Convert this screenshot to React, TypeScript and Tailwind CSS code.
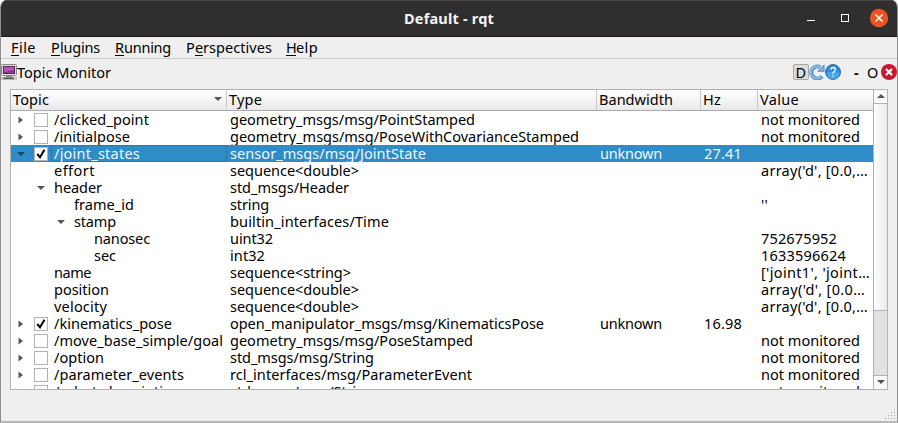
import { useLayoutEffect, useRef } from 'react';

// Text run that tracks its letters to span exactly w pixels.
function T({ children, w, className = '' }: { children: string; w: number; className?: string }) {
  const ref = useRef<HTMLSpanElement>(null);
  useLayoutEffect(() => {
    const fit = () => {
      const el = ref.current;
      if (!el) return;
      el.style.letterSpacing = '0px';
      const natural = el.getBoundingClientRect().width;
      el.style.letterSpacing = (w - natural) / children.length + 'px';
    };
    fit();
    document.fonts.ready.then(fit);
  }, [children, w]);
  return (
    <span ref={ref} className={`inline-block shrink-0 whitespace-pre ${className}`}>
      {children}
    </span>
  );
}

type Row = {
  name: string;
  nw: number;
  depth: number;
  arrow?: 'right' | 'down';
  check?: boolean;
  type: string;
  tw: number;
  hz?: string;
  value?: string;
  vw?: number;
  selected?: boolean;
};

const NM = { value: 'not monitored', vw: 99 };

const rows: Row[] = [
  { name: '/clicked_point', nw: 95, depth: 0, arrow: 'right', check: false, type: 'geometry_msgs/msg/PointStamped', tw: 245, ...NM },
  { name: '/initialpose', nw: 76, depth: 0, arrow: 'right', check: false, type: 'geometry_msgs/msg/PoseWithCovarianceStamped', tw: 349, ...NM },
  { name: '/joint_states', nw: 86, depth: 0, arrow: 'down', check: true, type: 'sensor_msgs/msg/JointState', tw: 196, hz: '27.41', selected: true },
  { name: 'effort', nw: 41, depth: 0, type: 'sequence<double>', tw: 129, value: "array('d', [0.0,…", vw: 107 },
  { name: 'header', nw: 48, depth: 0, arrow: 'down', type: 'std_msgs/Header', tw: 119 },
  { name: 'frame_id', nw: 60, depth: 1, type: 'string', tw: 39, value: "''", vw: 7 },
  { name: 'stamp', nw: 42, depth: 1, arrow: 'down', type: 'builtin_interfaces/Time', tw: 159 },
  { name: 'nanosec', nw: 56, depth: 2, type: 'uint32', tw: 43, value: '752675952', vw: 76 },
  { name: 'sec', nw: 22, depth: 2, type: 'int32', tw: 35, value: '1633596624', vw: 85 },
  { name: 'name', nw: 37, depth: 0, type: 'sequence<string>', tw: 121, value: "['joint1', 'joint…", vw: 109 },
  { name: 'position', nw: 55, depth: 0, type: 'sequence<double>', tw: 129, value: "array('d', [0.0…", vw: 104 },
  { name: 'velocity', nw: 53, depth: 0, type: 'sequence<double>', tw: 129, value: "array('d', [0.0,…", vw: 107 },
  { name: '/kinematics_pose', nw: 118, depth: 0, arrow: 'right', check: true, type: 'open_manipulator_msgs/msg/KinematicsPose', tw: 314, hz: '16.98' },
  { name: '/move_base_simple/goal', nw: 169, depth: 0, arrow: 'right', check: false, type: 'geometry_msgs/msg/PoseStamped', tw: 243, ...NM },
  { name: '/option', nw: 50, depth: 0, arrow: 'right', check: false, type: 'std_msgs/msg/String', tw: 144, ...NM },
  { name: '/parameter_events', nw: 130, depth: 0, arrow: 'right', check: false, type: 'rcl_interfaces/msg/ParameterEvent', tw: 242, ...NM },
  { name: '/robot_description', nw: 127, depth: 0, arrow: 'right', check: false, type: 'std_msgs/msg/String', tw: 144, ...NM },
];

function Arrow({ dir, dark }: { dir: 'right' | 'down' | 'up'; dark?: boolean }) {
  const d = dir === 'right' ? 'M0.5 0.5 L5 4 L0.5 7.5Z' : dir === 'down' ? 'M0 2 H8 L4 6Z' : 'M0 6 H8 L4 2Z';
  return (
    <svg className="h-2 w-2 shrink-0" viewBox="0 0 8 8">
      <path d={d} fill={dark ? '#184463' : '#555'} />
    </svg>
  );
}

function Check({ on }: { on: boolean }) {
  return (
    <span className="flex h-[14px] w-[14px] shrink-0 items-center justify-center border border-[#b2b2b2] bg-white">
      {on && (
        <svg className="h-3 w-3" viewBox="0 0 12 12">
          <path d="M2.3 6 L5 9.3 L9.5 1.8" fill="none" stroke="#000" strokeWidth="2" />
        </svg>
      )}
    </span>
  );
}

const indents = ['pl-[6px]', 'pl-[26px]', 'pl-[46px]'];
const arrowIndents = ['pl-[26px]', 'pl-[46px]', 'pl-[66px]'];

function TreeRow({ r }: { r: Row }) {
  const top = r.check !== undefined;
  return (
    <div className={`flex h-[17px] shrink-0 items-center leading-[17px] ${r.selected ? 'bg-[#308cc6] text-[#eff7fb]' : ''}`}>
      <div className="flex h-full w-[216px] shrink-0 items-center">
        {top ? (
          <>
            <span className={`flex w-[23px] shrink-0 ${r.arrow === 'down' ? 'pl-[6px]' : 'pl-[7px]'}`}>
              <Arrow dir={r.arrow!} dark={r.selected} />
            </span>
            <Check on={!!r.check} />
            <span className={`ml-[3px] flex h-full min-w-0 flex-1 items-center border pl-[2px] ${r.selected ? 'border-[#2779ab]' : 'border-transparent'}`}>
              <T w={r.nw}>{r.name}</T>
            </span>
          </>
        ) : (
          <>
            <span className={`flex shrink-0 ${r.arrow ? arrowIndents[r.depth] : indents[r.depth]}`}>
              {r.arrow ? <Arrow dir="down" /> : <span className="w-[28px]" />}
            </span>
            <T w={r.nw} className="ml-[9px]">{r.name}</T>
          </>
        )}
      </div>
      <div className="w-[370px] shrink-0 pl-[3px]">
        <T w={r.tw}>{r.type}</T>
      </div>
      <div className="w-[104px] shrink-0 pl-[3px]">{r.hz && <T w={62}>unknown</T>}</div>
      <div className="w-[57px] shrink-0 pl-[3px]">{r.hz && <T w={38}>{r.hz}</T>}</div>
      <div className="w-[115px] shrink-0 pl-[3px]">{r.value && <T w={r.vw!}>{r.value}</T>}</div>
    </div>
  );
}

function HeaderCell({ label, w, className }: { label: string; w: number; className: string }) {
  return (
    <div className={`flex h-full shrink-0 items-center pl-[2px] ${className}`}>
      <T w={w}>{label}</T>
    </div>
  );
}

function MenuItem({ before = '', hot, after, w }: { before?: string; hot: string; after: string; w: [number, number, number] }) {
  return (
    <span className="flex">
      {before && <T w={w[0]}>{before}</T>}
      <T w={w[1]} className="underline decoration-[1px] underline-offset-2 [text-decoration-skip-ink:none]">{hot}</T>
      <T w={w[2]}>{after}</T>
    </span>
  );
}

export default function App() {
  return (
    <div className="h-[423px] w-[898px] overflow-hidden bg-white font-['Noto_Sans',sans-serif] text-[14.5px] text-[#000]">
      <div className="flex h-[423px] w-[898px] flex-col overflow-hidden rounded-t-[7px] border-x border-b-2 border-x-[#8e8e8e] border-b-[#b8b8b8] bg-[#efefef]">
        <header className="flex h-[37px] shrink-0 items-center border-b border-t border-b-[#1c1b1b] border-t-[#4a4848] bg-[#302e2f]">
          <div className="w-[403px] shrink-0" />
          <T w={90} className="font-bold text-[#f5f5f5]">Default - rqt</T>
          <svg className="mb-px ml-[311px] h-5 w-[86px]" viewBox="0 0 86 20">
            <path d="M2 12.5H10" stroke="#fff" />
            <rect x="36.5" y="6.5" width="7" height="7" fill="none" stroke="#fff" />
            <circle cx="74" cy="10" r="9.2" fill="#e95420" />
            <path d="M70.5 6.5L77.5 13.5M77.5 6.5L70.5 13.5" stroke="#fff" strokeWidth="1.5" />
          </svg>
        </header>

        <nav className="flex h-[22px] shrink-0 gap-[15px] border-b border-[#cfcfcf] pl-[10px] leading-5">
          <MenuItem hot="F" after="ile" w={[0, 8, 17]} />
          <MenuItem hot="P" after="lugins" w={[0, 9, 40]} />
          <MenuItem hot="R" after="unning" w={[0, 9, 47]} />
          <MenuItem before="P" hot="e" after="rspectives" w={[9, 8, 69]} />
          <div className="-ml-px flex">
            <MenuItem hot="H" after="elp" w={[0, 10, 22]} />
          </div>
        </nav>

        <div className="flex h-[31px] shrink-0 items-start">
          <div className="flex h-[26px] w-full items-center">
            <svg className="h-4 w-4 shrink-0" viewBox="0 0 16 16">
              <rect x="0.5" y="0.5" width="15" height="11" rx="1" fill="#ddd" stroke="#8a8a88" />
              <rect x="2" y="2" width="12" height="8" fill="#5d2260" />
              <path d="M3 3H13V6L3 8.5Z" fill="#b257b4" />
              <path d="M3 9L13 6V9Z" fill="#8e3c92" />
              <path d="M5 12H11V13H5Z" fill="#888" />
              <path d="M0.5 13.5H15.5V15.5H0.5Z" fill="#e8e8e6" stroke="#a5a5a3" strokeWidth="0.7" />
              <path d="M3 13.5H13V15H2Z" fill="#555753" />
            </svg>
            <T w={94} className="translate-y-px">Topic Monitor</T>
            <div className="ml-auto flex items-center">
              <span className="flex h-4 w-4 items-center justify-center rounded-[2px] border border-[#a8a8a8] bg-[#dcdcdc] leading-none">
                <T w={11}>D</T>
              </span>
              <svg className="h-4 w-4" viewBox="0 0 16 16">
                <path d="M13 12.2A6 6 0 1 1 11.2 3.2" fill="none" stroke="#4c86bd" strokeWidth="4" />
                <path d="M15.5 0.3V7.7H8Z" fill="#4c86bd" />
                <path d="M12.6 11.8A6 6 0 1 1 12 4.2" fill="none" stroke="#8ab8e2" strokeWidth="2.4" />
                <path d="M14.5 2.5V6.7H10.3Z" fill="#8ab8e2" />
              </svg>
              <svg className="h-4 w-4" viewBox="0 0 16 16">
                <circle cx="8" cy="8" r="7.5" fill="#268bd8" stroke="#426d8b" />
                <path d="M1.5 9Q8 6 14.5 9A6.5 6.5 0 0 1 1.5 9" fill="#45a6e8" />
                <path d="M5.8 5.8Q6 3.5 8.2 3.5Q10.4 3.6 10.4 5.6Q10.3 7 8.8 7.8Q8 8.3 8 9.8M8 11.2V12.6" fill="none" stroke="#f3faff" strokeWidth="1.4" />
              </svg>
              <T w={6} className="ml-[13px] translate-y-px font-bold">-</T>
              <T w={12} className="ml-[7px] translate-y-px">O</T>
              <svg className="ml-[2px] h-4 w-4" viewBox="0 0 16 16">
                <circle cx="8" cy="8" r="8" fill="#c9182f" />
                <path d="M5 5L11 11M11 5L5 11" stroke="#fff" strokeWidth="2.2" />
              </svg>
            </div>
          </div>
        </div>

        <main className="ml-[9px] mt-[-1px] flex h-[301px] w-[878px] shrink-0 border border-[#b2b2b2] bg-white">
          <div className="flex w-[862px] shrink-0 flex-col overflow-hidden">
            <div className="flex h-[21px] shrink-0 border-b border-[#a9a9a9] bg-linear-to-b from-white to-[#e9e9e9]">
              <div className="flex h-full w-[216px] shrink-0 items-center justify-between border-r border-[#c8c8c8] pl-[2px] pr-[4px]">
                <T w={36}>Topic</T>
                <span className="mb-[3px] flex"><Arrow dir="down" /></span>
              </div>
              <HeaderCell label="Type" w={33} className="w-[370px] border-r border-[#c8c8c8]" />
              <HeaderCell label="Bandwidth" w={74} className="w-[104px] border-r border-[#c8c8c8]" />
              <HeaderCell label="Hz" w={18} className="w-[57px] border-r border-[#c8c8c8]" />
              <HeaderCell label="Value" w={39} className="w-[115px]" />
            </div>
            <div className="flex min-h-0 flex-1 flex-col overflow-hidden">
              {rows.map((r) => (
                <TreeRow key={r.name} r={r} />
              ))}
            </div>
          </div>
          <div className="flex w-[14px] shrink-0 flex-col border-l border-[#b2b2b2] bg-[#e1e1e1]">
            <div className="flex h-[13px] items-center justify-center bg-[#fafafa] pb-px"><Arrow dir="up" /></div>
            <div className="h-[208px] border-y border-[#b2b2b2] bg-linear-to-r from-[#fdfdfd] to-[#ececec]" />
            <div className="mt-auto flex h-[14px] items-center justify-center border-t border-[#b2b2b2] bg-[#fafafa] pb-px"><Arrow dir="down" /></div>
          </div>
        </main>

        <footer className="flex flex-1 items-end justify-end">
          <svg className="h-3 w-3" viewBox="0 0 12 12">
            {[0, 1, 2, 3].map((y) =>
              [0, 1, 2, 3].filter((x) => x + y >= 3).map((x) => (
                <rect key={`${x}-${y}`} x={x * 3} y={y * 3} width="1" height="1" fill="#a3a3a3" />
              )),
            )}
          </svg>
        </footer>
      </div>
    </div>
  );
}
